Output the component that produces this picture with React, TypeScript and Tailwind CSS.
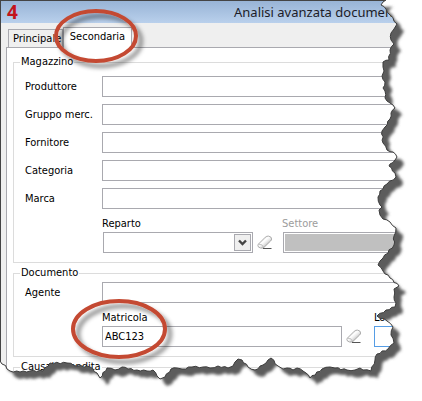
import { useState } from 'react';
import type { ReactNode } from 'react';

type Point = [number, number];

const TEAR_POINTS: Point[] = [
  [386, 0], [381, 5], [386, 9], [390, 15], [397, 24], [394, 29], [391, 33],
  [391, 40], [394, 44], [390, 50], [389, 60], [383, 62], [383, 67], [384, 71],
  [382, 76], [385, 82], [383, 88], [385, 91], [385, 98], [390, 103], [395, 108],
  [391, 113], [390, 119], [385, 127], [382, 131], [383, 143], [387, 150],
  [393, 152], [397, 157], [395, 160], [390, 164], [389, 166], [395, 173],
  [396, 177], [387, 184], [380, 191], [378, 197], [380, 205], [382, 207],
  [379, 210], [380, 215], [383, 219], [390, 222], [396, 228], [394, 236],
  [394, 245], [383, 258], [378, 265], [383, 271], [390, 278], [399, 286],
  [394, 289], [394, 297], [396, 303], [395, 307], [386, 310], [377, 316],
  [387, 321], [393, 327], [391, 335], [394, 343], [388, 349], [377, 354],
  [375, 360], [371, 371], [363, 370], [360, 368], [355, 370], [347, 370],
  [335, 368], [330, 367], [322, 369], [310, 378], [306, 373], [303, 371],
  [297, 368], [293, 370], [287, 368], [283, 369], [278, 366], [271, 358],
  [268, 360], [263, 365], [255, 370], [248, 367], [242, 360], [238, 359],
  [233, 366], [228, 368], [218, 366], [210, 368], [203, 367], [192, 367],
  [182, 369], [177, 368], [171, 369], [165, 377], [160, 379], [157, 376],
  [153, 370], [147, 371], [137, 370], [128, 369], [122, 367], [115, 370],
  [107, 368], [100, 378], [97, 373], [90, 367], [78, 366], [67, 363],
  [50, 363], [43, 371], [30, 371], [20, 372], [10, 371], [0, 361],
];

// roughen the long segments so the paper edge looks ragged
const roughen = (points: Point[]) => {
  const result: Point[] = [];
  points.forEach(([x, y], i) => {
    result.push([x, y]);
    const next = points[i + 1];
    if (!next) return;
    const length = Math.hypot(next[0] - x, next[1] - y);
    const steps = Math.floor(length / 3);
    for (let s = 1; s < steps; s += 1) {
      const t = s / steps;
      const shift = (i + s) % 2 === 0 ? 0.7 : -0.7;
      result.push([
        x + (next[0] - x) * t + ((next[1] - y) / length) * shift,
        y + (next[1] - y) * t - ((next[0] - x) / length) * shift,
      ]);
    }
  });
  return result.map(([x, y]) => `${x.toFixed(1)} ${y.toFixed(1)}`).join('L');
};

const EDGE = roughen(TEAR_POINTS);

function TornEdge() {
  return (
    <svg
      aria-hidden="true"
      viewBox="0 0 422 401"
      preserveAspectRatio="none"
      className="pointer-events-none absolute inset-0 h-full w-full">
      <defs>
        <clipPath id="outside">
          <path d={`M${EDGE}V401H422V0Z`} />
        </clipPath>
        <filter id="soft" x="-10%" y="-10%" width="120%" height="120%">
          <feGaussianBlur stdDeviation="1.7" />
        </filter>
      </defs>
      <g clipPath="url(#outside)">
        <rect width="422" height="401" fill="#fff" />
        <path
          d={`M${EDGE}V0Z`}
          transform="translate(7 7)"
          fill="#5c5c5c"
          filter="url(#soft)"
        />
      </g>
      <path d={`M${EDGE}`} fill="none" stroke="#3c3c3c" />
    </svg>
  );
}

function Highlights() {
  return (
    <svg
      aria-hidden="true"
      width="200"
      height="380"
      className="pointer-events-none absolute top-0 left-0">
      <defs>
        <filter id="ring" x="-20%" y="-20%" width="150%" height="150%">
          <feDropShadow dx="5" dy="5" stdDeviation="2" floodOpacity="0.45" />
        </filter>
      </defs>
      <g fill="none" stroke="#c44a32" strokeWidth="4" filter="url(#ring)">
        <ellipse cx="96" cy="36" rx="40" ry="25" />
        <ellipse cx="119" cy="329" rx="46" ry="28" />
      </g>
    </svg>
  );
}

function EraserButton({ label }: { label: string }) {
  return (
    <button type="button" aria-label={label} className="h-[21px] w-4 shrink-0">
      <svg width="16" height="16" viewBox="0 0 16 16" className="block">
        <defs>
          <linearGradient id="rubber" x1="0" y1="0" x2="1" y2="1">
            <stop offset="0.2" stopColor="#c8c8c8" />
            <stop offset="0.42" stopColor="#fff" />
            <stop offset="0.55" stopColor="#ececec" />
            <stop offset="0.8" stopColor="#a8a8a8" />
          </linearGradient>
        </defs>
        <path
          d="M1.5 9L8.3 2.2Q9.6 1 11.5 1.1Q14.6 1.5 14.6 4Q14.5 5.2 13.6 6L7.2 12.2Q5.8 13.5 3.5 13Q0.9 12.4 0.9 10.6Q0.9 9.7 1.5 9Z"
          fill="url(#rubber)"
          stroke="#9a9a9a"
          strokeWidth="0.8"
        />
        <path d="M1.6 9.2Q5.8 9 6.6 12.4" fill="none" stroke="#b4b4b4" strokeWidth="0.8" />
        <path d="M6 13.5H14.5" stroke="#555" />
      </svg>
    </button>
  );
}

function Group({ title, children }: { title: string; children?: ReactNode }) {
  return (
    <fieldset className="border border-r-0 border-[#dcdcdc] pb-[9px] pl-[11px]">
      <legend className="-ml-[5px] h-4 px-px leading-4">{title}</legend>
      {children}
    </fieldset>
  );
}

function FieldRow({ id, label }: { id: string; label: string }) {
  return (
    <div className="flex h-[21px] items-center">
      <label htmlFor={id} className="w-[77px] shrink-0">
        {label}
      </label>
      <input
        id={id}
        type="text"
        className="h-[21px] min-w-0 flex-1 border border-[#a9a9af] bg-white px-[3px]"
      />
    </div>
  );
}

const FIELDS = [
  { id: 'produttore', label: 'Produttore' },
  { id: 'gruppo', label: 'Gruppo merc.' },
  { id: 'fornitore', label: 'Fornitore' },
  { id: 'categoria', label: 'Categoria' },
  { id: 'marca', label: 'Marca' },
];

function App() {
  const [matricola, setMatricola] = useState('ABC123');

  return (
    <div className="relative min-h-screen overflow-hidden bg-white font-['DejaVu_Sans_Condensed','DejaVu_Sans',sans-serif] text-[11px] leading-4 text-black">
      <main className="border-t border-l border-[#444] bg-[#efefef] pb-2">
        <header className="flex h-[22px] items-center bg-linear-to-b from-[#98b4d6] to-[#b9d0ec] pl-[6px] font-['Noto_Sans',sans-serif]">
          <span className="w-[227px] shrink-0 text-[19px] leading-[22px] font-bold text-[#c3141b]">
            4
          </span>
          <h1 className="text-[13px] leading-[22px] whitespace-nowrap text-[#1c1c28]">
            Analisi avanzata documenti
          </h1>
        </header>

        <div role="tablist" className="flex items-end pt-1 pl-[7px]">
          <button
            type="button"
            role="tab"
            aria-selected="false"
            className="h-[18px] w-[55px] border border-b-0 border-[#a9a9af] bg-[#efefef] pl-1 text-left whitespace-nowrap">
            Principale
          </button>
          <button
            type="button"
            role="tab"
            aria-selected="true"
            className="relative -mb-px h-[21px] w-[69px] border border-b-0 border-[#a9a9af] bg-white pb-[2px] text-center">
            Secondaria
          </button>
        </div>

        <div className="ml-[5px] flex flex-col gap-[2px] border-t border-l border-[#a9a9af] bg-white pt-[6px] pl-[6px]">
          <Group title="Magazzino">
            <div className="flex flex-col gap-[7px] pt-[6px]">
              {FIELDS.map((field) => (
                <FieldRow key={field.id} id={field.id} label={field.label} />
              ))}
            </div>
            <div className="mt-[7px] flex items-end pl-[77px]">
              <div className="flex flex-col">
                <label htmlFor="reparto">Reparto</label>
                <div className="relative ml-px">
                  <select
                    id="reparto"
                    className="block h-[21px] w-[150px] appearance-none border border-[#a9a9af] bg-white"
                  />
                  <span className="pointer-events-none absolute top-[2px] right-[2px] flex h-[17px] w-[17px] items-center justify-center border border-[#a9a9af] bg-[#efefef]">
                    <svg width="9" height="8" viewBox="0 0 9 8">
                      <path d="M1 1.5L4.5 5L8 1.5" fill="none" stroke="#444" strokeWidth="2.4" />
                    </svg>
                  </span>
                </div>
              </div>
              <div className="ml-1 flex">
                <EraserButton label="Cancella reparto" />
              </div>
              <div className="ml-[9px] flex min-w-0 flex-1 flex-col">
                <label htmlFor="settore" className="text-[#9c9c9c]">
                  Settore
                </label>
                <select
                  id="settore"
                  disabled
                  className="ml-px h-[21px] appearance-none border border-[#a9a9af] bg-[#c0c0c0] opacity-100 shadow-[inset_0_0_0_1px_#fff]"
                />
              </div>
            </div>
          </Group>

          <Group title="Documento">
            <div className="pt-px">
              <FieldRow id="agente" label="Agente" />
            </div>
            <div className="mt-[7px] flex items-end pl-[77px]">
              <div className="flex w-[240px] shrink-0 flex-col">
                <label htmlFor="matricola">Matricola</label>
                <input
                  id="matricola"
                  type="text"
                  value={matricola}
                  onChange={(event) => setMatricola(event.target.value)}
                  className="h-[21px] border border-[#a9a9af] bg-white px-[2px]"
                />
              </div>
              <div className="ml-1 flex">
                <EraserButton label="Cancella matricola" />
              </div>
              <div className="ml-3 flex min-w-0 flex-1 flex-col">
                <label htmlFor="lotto">Lotto</label>
                <input
                  id="lotto"
                  type="text"
                  className="h-[21px] w-full border border-[#569de5] bg-white px-[2px]"
                />
              </div>
            </div>
          </Group>

          <Group title="Causale vendita" />
        </div>
      </main>

      <TornEdge />
      <Highlights />
    </div>
  );
}

export default App;
